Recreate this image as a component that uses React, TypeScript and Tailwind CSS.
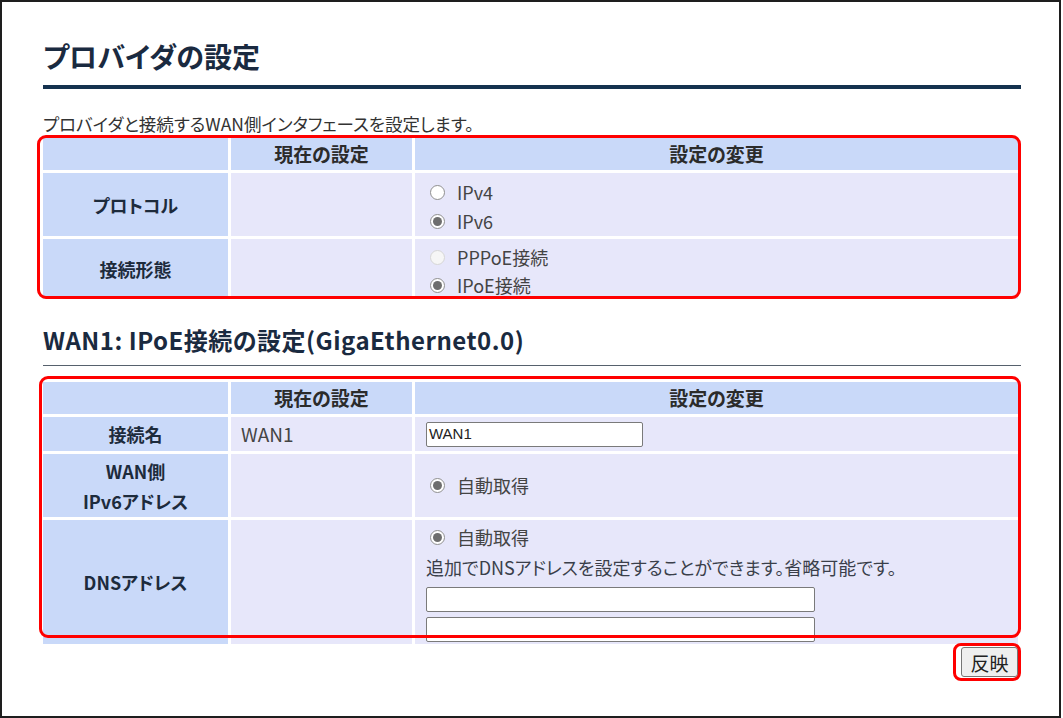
import React from "react";

type RadioProps = { label: string; checked?: boolean; disabled?: boolean };

const Radio = ({ label, checked, disabled }: RadioProps) => {
  return (
    <div className="flex items-center h-[29px]">
      <span
        className={
          disabled
            ? "shrink-0 ml-[4px] w-[15px] h-[15px] rounded-full border border-[#d6d6d6] bg-[#f6f6f6] flex items-center justify-center"
            : "shrink-0 ml-[4px] w-[15px] h-[15px] rounded-full border border-[#8f8f8f] bg-white flex items-center justify-center"
        }
      >
        {checked && <span className="w-[9px] h-[9px] rounded-full bg-[#6e6e6e]" />}
      </span>
      <span className="ml-[12px]">{label}</span>
    </div>
  );
};

const head = "bg-[#c9d9f9] flex items-center justify-center font-bold text-[19px] text-[#2b2b2b]";
const label = "bg-[#c9d9f9] flex flex-col items-center justify-center font-bold text-[18px] text-[#1d2b3c] leading-[30px]";
const cell = "bg-[#e7e7fa]";

const Input = ({ value, w }: { value?: string; w: string }) => (
  <div
    className={`${w} h-[25px] border border-[#7a7a7a] rounded-[2px] bg-white flex items-center pl-[2px] font-['Liberation_Sans',sans-serif] text-[15px] text-[#222] [font-feature-settings:normal]`}
  >
    {value}
  </div>
);

export default function App() {
  return (
    <div className="relative w-[1061px] h-[718px] border-2 border-[#1e1e1e] bg-white text-[#333] font-['Noto_Sans_CJK_JP','Noto_Sans',sans-serif] [font-feature-settings:'palt']">
      <div className="pl-[41px] pt-[34px] w-[1019px]">
        <h1 className="text-[28px] leading-[40px] font-bold text-[#1a2a40]">プロバイダの設定</h1>
        <div className="mt-[9px] h-[4px] bg-[#15324f]" />
        <p className="mt-[23px] text-[17.5px] leading-[24px] text-[#333]">
          プロバイダと接続するWAN側インタフェースを設定します。
        </p>

        <div className="mt-[2px] w-[975px] grid grid-cols-[185px_181px_603px] grid-rows-[32px_63px_60px] gap-[3px] text-[18px] text-[#444]">
          <div className={head} />
          <div className={head}>現在の設定</div>
          <div className={head}>設定の変更</div>

          <div className={label}>プロトコル</div>
          <div className={cell} />
          <div className={`${cell} flex flex-col justify-center pt-[4px] px-[11px]`}>
            <Radio label="IPv4" />
            <Radio label="IPv6" checked />
          </div>

          <div className={label}>接続形態</div>
          <div className={cell} />
          <div className={`${cell} flex flex-col justify-center pt-[4px] px-[11px]`}>
            <Radio label="PPPoE接続" disabled />
            <Radio label="IPoE接続" checked />
          </div>
        </div>

        <h2 className="mt-[25px] text-[24px] leading-[32px] tracking-[0.5px] font-bold text-[#1a2a40]">
          WAN1: IPoE接続の設定(GigaEthernet0.0)
        </h2>
        <div className="mt-[9px] h-px bg-[#56616d]" />

        <div className="mt-[16px] w-[975px] grid grid-cols-[185px_181px_603px] grid-rows-[32px_34px_63px_124px] gap-[3px] text-[18px] text-[#444]">
          <div className={head} />
          <div className={head}>現在の設定</div>
          <div className={head}>設定の変更</div>

          <div className={label}>接続名</div>
          <div className={`${cell} flex items-center pl-[10px] text-[19px]`}>WAN1</div>
          <div className={`${cell} flex items-center px-[11px]`}>
            <Input value="WAN1" w="w-[217px]" />
          </div>

          <div className={label}>
            <span>WAN側</span>
            <span>IPv6アドレス</span>
          </div>
          <div className={cell} />
          <div className={`${cell} flex flex-col justify-center px-[11px]`}>
            <Radio label="自動取得" checked />
          </div>

          <div className={label}>DNSアドレス</div>
          <div className={cell} />
          <div className={`${cell} flex flex-col pt-[2px] px-[11px]`}>
            <div className="h-[30px] flex items-center">
              <Radio label="自動取得" checked />
            </div>
            <div className="h-[30px] flex items-center text-[18px] text-[#3a3f4a]">
              追加でDNSアドレスを設定することができます。省略可能です。
            </div>
            <div className="mt-[5px]">
              <Input w="w-[389px]" />
            </div>
            <div className="mt-[5px]">
              <Input w="w-[389px]" />
            </div>
          </div>
        </div>

        <div className="mt-[3px] w-[975px] flex justify-end">
          <button className="w-[57px] h-[30px] border border-[#767676] rounded-[3px] bg-[#efefef] text-[19px] text-[#222] leading-none">
            反映
          </button>
        </div>
      </div>

      {/* annotation boxes */}
      <div className="absolute left-[35px] top-[133px] w-[984px] h-[164px] border-[3px] border-[#ff0000] rounded-[9px] pointer-events-none" />
      <div className="absolute left-[37px] top-[374px] w-[982px] h-[262px] border-[3px] border-[#ff0000] rounded-[9px] pointer-events-none" />
      <div className="absolute left-[951px] top-[641px] w-[68px] h-[38px] border-[3px] border-[#ff0000] rounded-[8px] pointer-events-none" />
    </div>
  );
}
